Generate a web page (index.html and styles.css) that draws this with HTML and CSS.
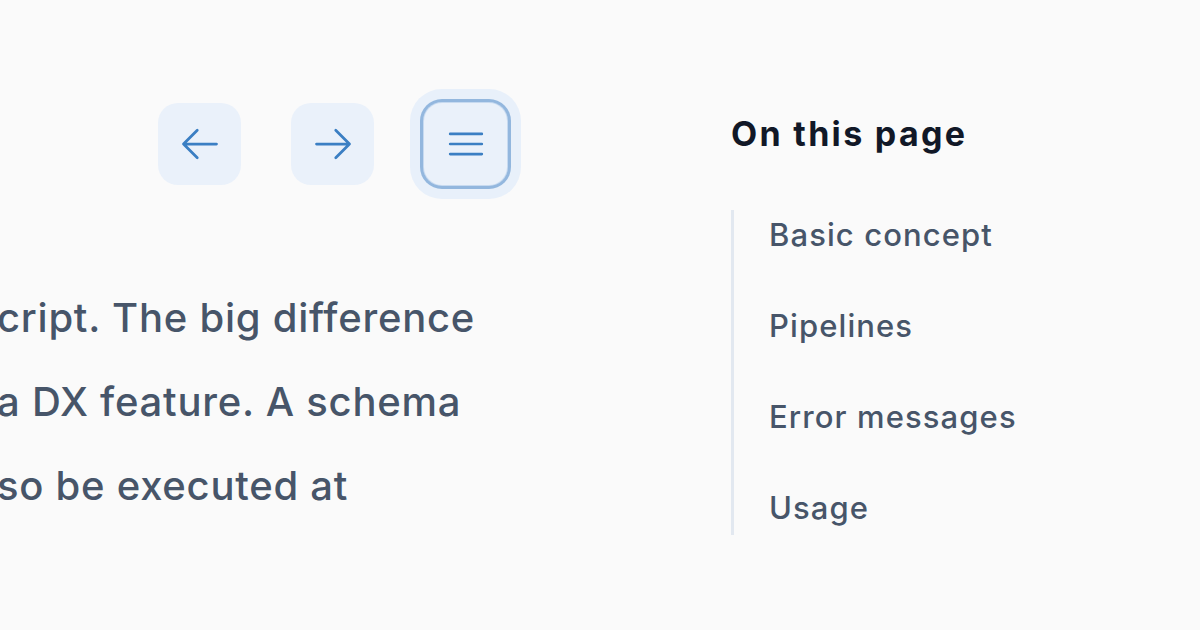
FILE: index.html
```html
<!DOCTYPE html>
<html lang="en">
<head>
<meta charset="utf-8">
<title>On this page</title>
<link rel="stylesheet" href="styles.css">
</head>
<body>
<div class="page">
  <main class="main">
    <nav class="pager">
      <button class="btn" aria-label="Previous">
        <svg class="icon" viewBox="0 0 24 24" fill="none" stroke="currentColor" stroke-width="1.5" stroke-linecap="round" stroke-linejoin="round"><path d="M10.5 19.5 3 12m0 0 7.5-7.5M3 12h18"/></svg>
      </button>
      <button class="btn" aria-label="Next">
        <svg class="icon" viewBox="0 0 24 24" fill="none" stroke="currentColor" stroke-width="1.5" stroke-linecap="round" stroke-linejoin="round"><path d="M13.5 4.5 21 12m0 0-7.5 7.5M21 12H3"/></svg>
      </button>
      <button class="btn btn-focus" aria-label="Menu">
        <svg class="icon icon-menu" viewBox="0 0 24 24" fill="none" stroke="currentColor" stroke-width="1.4" stroke-linecap="round"><path d="M3.75 6.75h16.5M3.75 12h16.5M3.75 17.25h16.5"/></svg>
      </button>
    </nav>
    <p class="text">cript. The big difference<br>a DX feature. A schema<br>so be executed at</p>
  </main>
  <aside class="toc">
    <h2 class="toc-title">On this page</h2>
    <ul class="toc-list">
      <li>Basic concept</li>
      <li>Pipelines</li>
      <li>Error messages</li>
      <li>Usage</li>
    </ul>
  </aside>
</div>
</body>
</html>
```
FILE: styles.css
```css
html, body {
  margin: 0;
  padding: 0;
}
body {
  width: 1200px;
  height: 630px;
  overflow: hidden;
  background: #fafafa;
  font-family: Inter, "Open Sans", sans-serif;
}
.page {
  display: flex;
  padding-top: 103px;
}
.main {
  width: 508px;
  display: flex;
  flex-direction: column;
}
.pager {
  display: flex;
  justify-content: flex-end;
  gap: 50px;
  padding-right: 1px;
}
.btn {
  width: 83px;
  height: 82px;
  border: none;
  border-radius: 20px;
  background: #eaf1fa;
  color: #3b7fc3;
  display: flex;
  align-items: center;
  justify-content: center;
  padding: 0;
}
.btn-focus {
  box-shadow: 0 0 0 1px #c7daf0, 0 0 0 4px #93b7de, 0 0 0 14px #e8f0fa;
  border-radius: 18px;
}
.icon {
  width: 44px;
  height: 44px;
}
.icon-menu {
  width: 46px;
  height: 46px;
}
.text {
  margin: 91px 0 0 -3px;
  white-space: nowrap;
  font-size: 40px;
  font-weight: 500;
  line-height: 84px;
  color: #475569;
  letter-spacing: 0.75px;
}
.toc {
  margin-left: 223px;
  padding-top: 7px;
}
.toc-title {
  margin: 0;
  font-size: 34px;
  line-height: 48px;
  font-weight: 700;
  color: #111827;
  letter-spacing: 2.3px;
}
.toc-list {
  list-style: none;
  margin: 52px 0 0;
  padding: 5px 0 7px 35px;
  border-left: 3px solid #e2e8f0;
  display: flex;
  flex-direction: column;
  gap: 51px;
}
.toc-list li {
  font-size: 31px;
  line-height: 40px;
  font-weight: 500;
  color: #475569;
  letter-spacing: 1.1px;
}
```
